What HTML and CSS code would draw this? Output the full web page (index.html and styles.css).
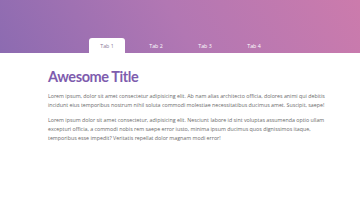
FILE: index.html
```html
<!DOCTYPE html>
<html lang="en">
<head>
    <meta charset="UTF-8">
    <meta name="viewport" content="width=device-width, initial-scale=1.0">
    <title>Tabs</title>
    <link rel="stylesheet" href="styles.css">
</head>
<body>
    <header class="hero">
        <nav class="tabs">
            <a class="tab active" href="#">Tab 1</a>
            <a class="tab" href="#">Tab 2</a>
            <a class="tab" href="#">Tab 3</a>
            <a class="tab" href="#">Tab 4</a>
        </nav>
    </header>
    <main class="content">
        <h1>Awesome Title</h1>
        <p>Lorem ipsum, dolor sit amet consectetur adipisicing elit. Ab nam alias architecto officia, dolores animi qui debitis incidunt eius temporibus nostrum nihil soluta commodi molestiae necessitatibus ducimus amet. Suscipit, saepe!</p>
        <p>Lorem ipsum dolor sit amet consectetur, adipisicing elit. Nesciunt labore id sint voluptas assumenda optio ullam excepturi officia, a commodi nobis rem saepe error iusto, minima ipsum ducimus quos dignissimos itaque, temporibus esse impedit? Veritatis repellat dolor magnam modi error!</p>
    </main>
</body>
</html>
```

FILE: styles.css
```css
body {
    margin: 0;
    background: #fff;
    font-family: "Open Sans", sans-serif;
}

.hero {
    height: 53px;
    background: linear-gradient(60deg, #8c6bb1 0%, #b277b3 50%, #cc7bac 100%);
    display: flex;
    align-items: flex-end;
}

.tabs {
    display: flex;
    gap: 13px;
    margin-left: 89px;
}

.tab {
    width: 36px;
    height: 15px;
    line-height: 16px;
    text-align: center;
    font-size: 5.3px;
    color: #fff;
    text-decoration: none;
    border-radius: 3px 3px 0 0;
}

.tab.active {
    background: #fff;
    color: #8a7a99;
}

.content {
    padding: 15px 26px 0 48px;
}

h1 {
    margin: 0 0 5.5px;
    font-family: "Lato", sans-serif;
    font-size: 14.5px;
    line-height: 18px;
    letter-spacing: -0.4px;
    font-weight: bold;
    color: #7e5cae;
}

p {
    margin: 0 0 6.5px;
    font-size: 5.3px;
    line-height: 9px;
    color: #6a6a6a;
}
```
